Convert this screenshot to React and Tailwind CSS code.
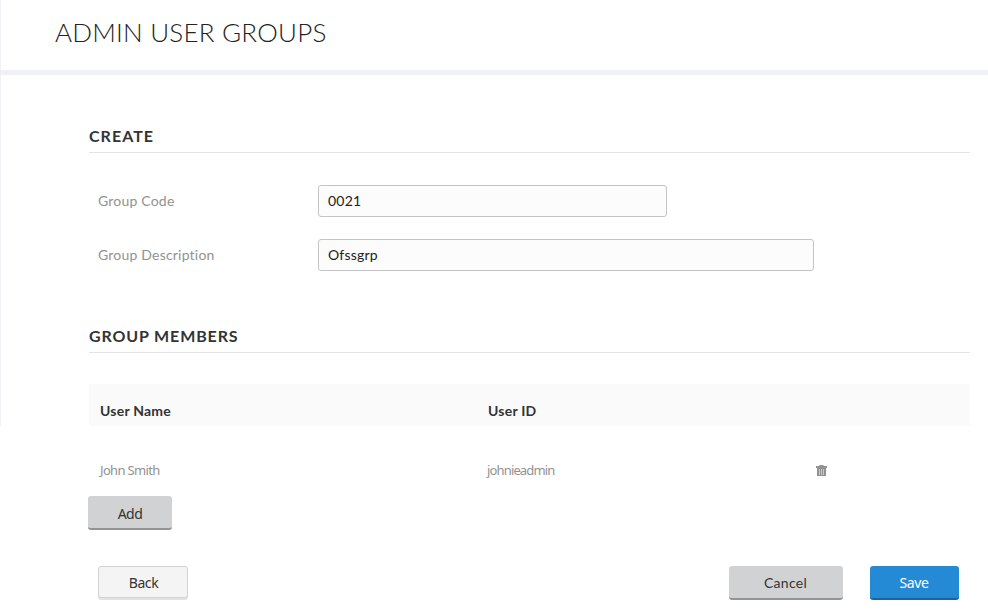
const heading =
  "h-[25px] border-b border-[#e3e3e3] text-[16px] leading-[15px] font-bold text-[#333]";
const label = "w-[229px] pl-[9px] text-[14px] leading-[32px] tracking-[0.2px] text-[#929292]";
const input =
  "h-[32px] rounded-[3px] border border-[#c4c4c4] bg-[#fcfcfc] px-[9px] pb-[2px] text-[14px] tracking-[0.2px] text-[#222] outline-none";

function TrashIcon() {
  return (
    <svg className="mt-px" width="11" height="12" viewBox="0 0 11 12" aria-label="Delete">
      <path d="M3.5 2V.5h4V2" fill="none" stroke="#999" />
      <path d="M0 1h11v2H0z" fill="#929292" />
      <path d="M1 3h9v8H1z" fill="#929292" />
      <path d="M3.5 4v6M5.5 4v6M7.5 4v6" stroke="#c9c9c9" />
    </svg>
  );
}

export default function App() {
  return (
    <div className="h-[610px] w-[988px] overflow-hidden bg-white font-['Lato',sans-serif] text-[#333]">
      <div className="h-[426px] border-l border-[#f0f0f7]">
        <header className="h-[75px] border-b-[5px] border-[#f0f1f7] pt-[16px] pl-[54px]">
          <h1 className="text-[26px] leading-[32px] font-light tracking-[0.22px] text-[#222]">
            ADMIN USER GROUPS
          </h1>
        </header>
        <main className="ml-[88px] w-[881px] pt-[53px]">
          <h2 className={`${heading} tracking-[1.04px]`}>CREATE</h2>
          <div className="mt-[32px] flex">
            <label className={label}>Group Code</label>
            <input className={`${input} w-[349px]`} defaultValue="0021" />
          </div>
          <div className="mt-[22px] flex">
            <label className={label}>Group Description</label>
            <input className={`${input} w-[496px]`} defaultValue="Ofssgrp" />
          </div>
          <h2 className={`${heading} mt-[57px] tracking-[0.87px]`}>GROUP MEMBERS</h2>
          <div className="mt-[31px] flex h-[42px] bg-[#fafafa] pt-[17px] pl-[11px] text-[14px] leading-[20px] font-bold tracking-[0.22px]">
            <span className="w-[388px]">User Name</span>
            <span>User ID</span>
          </div>
        </main>
      </div>
      <div className="flex h-[70px] items-center pt-[18px] pl-[99px] font-['Noto_Sans',sans-serif] text-[13px] text-[#929292]">
        <span className="w-[388px] pt-[2px] pl-px tracking-[-0.65px]">John Smith</span>
        <span className="w-[329px] pt-[2px] tracking-[-0.85px]">johnieadmin</span>
        <TrashIcon />
      </div>
      <button className="ml-[88px] block h-[34px] w-[84px] rounded-[3px] border-b-2 border-[#929395] bg-[#d1d2d4] pt-[2px] font-['Noto_Sans',sans-serif] text-[14px] tracking-[-0.5px]">
        Add
      </button>
      <div className="mt-[36px] flex pl-[98px] font-['Noto_Sans',sans-serif] text-[14px] tracking-[-0.4px]">
        <button className="h-[32px] w-[90px] rounded-[3px] border border-[#d2d2d2] bg-[#f4f4f4] pl-px shadow-[0_2px_0_#e2e2e2]">
          Back
        </button>
        <button className="ml-[541px] h-[34px] w-[114px] rounded-[3px] border-b-2 border-[#949494] bg-[#d1d2d4] pr-px font-['Lato',sans-serif] tracking-[0.3px]">
          Cancel
        </button>
        <button className="ml-[27px] h-[34px] w-[89px] rounded-[3px] border-b-2 border-[#1f639c] bg-[#258ad5] pr-px text-white">
          Save
        </button>
      </div>
    </div>
  );
}
